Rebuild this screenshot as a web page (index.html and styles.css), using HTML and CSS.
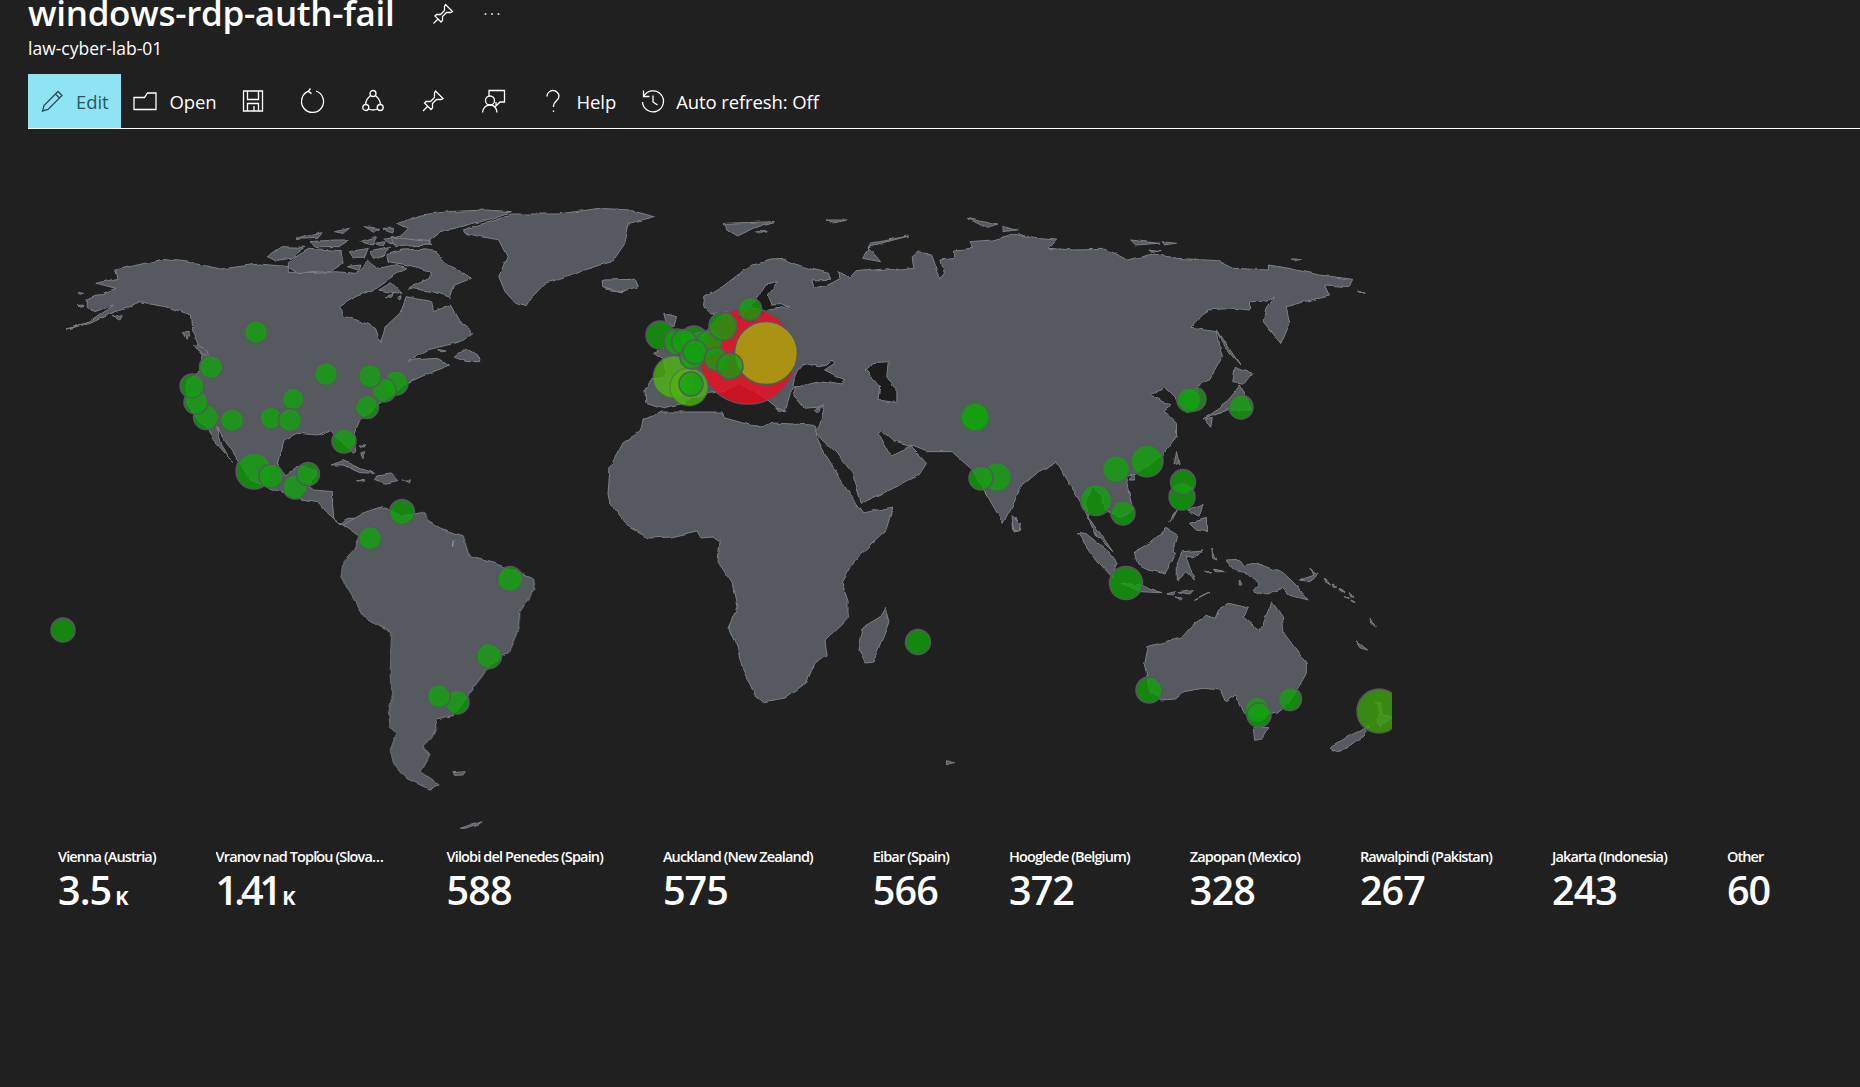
FILE: index.html
```html
<!DOCTYPE html>
<html>
<head>
    <meta charset="utf-8" />
    <title>windows-rdp-auth-fail</title>
    <link rel="stylesheet" href="styles.css">
</head>
<body>
    <div id="header">
        <div class="titleRow">
            <h1>windows-rdp-auth-fail</h1>
            <svg class="ico pinIco" viewBox="0 0 24 24"><path d="M14.5 2.5 21.5 9.5 19.5 10.5 15.5 10.5 11.5 14.5 11.5 18.5 10 20 4 14 5.5 12.5 9.5 12.5 13.5 8.5 13.5 4.5ZM7 17 2.5 21.5"/></svg>
            <svg class="dots" viewBox="0 0 16 4"><circle cx="1.5" cy="2" r="1"/><circle cx="8" cy="2" r="1"/><circle cx="14.5" cy="2" r="1"/></svg>
        </div>
        <div class="subtitle">law-cyber-lab-01</div>
    </div>

    <div id="toolbar">
        <div class="tool active">
            <svg class="ico" viewBox="0 0 24 24"><path d="M18 2.5 22 6.5 8 20.5 2.5 22 4 16.5ZM15.5 5 19.5 9"/></svg>
            <span>Edit</span>
        </div>
        <div class="tool openTool">
            <svg class="ico" viewBox="0 0 24 24"><path d="M1 8.5H11.5L14.5 4H23V20.5H1Z"/></svg>
            <span>Open</span>
        </div>
        <div class="tool iconOnly">
            <svg class="ico" viewBox="0 0 24 24"><path d="M2.5 2H21.5V22H2.5ZM6.5 2V10.5H17.5V2M6.5 22V14.5H17.5V22M13 17V22"/></svg>
        </div>
        <div class="tool iconOnly">
            <svg class="ico" viewBox="0 0 24 24"><path d="M15 2A11 11 0 1 1 7.5 2.2M9.5 -.5 7.3 2.3 10.5 4.6"/></svg>
        </div>
        <div class="tool iconOnly">
            <svg class="ico" viewBox="0 0 24 24"><circle cx="12" cy="4.5" r="3"/><circle cx="4.8" cy="18.5" r="3"/><circle cx="19.2" cy="18.5" r="3"/><path d="M9.6 6.5C6.5 9 4.6 12 4.6 15.5M14.4 6.5C17.5 9 19.4 12 19.4 15.5M7.8 20Q12 22 16.2 20"/></svg>
        </div>
        <div class="tool iconOnly">
            <svg class="ico" viewBox="0 0 24 24"><path d="M14.5 2 22 9.5 20 10.5 15.5 10.5 11.5 14.5 11.5 19 10 20.5 3.5 14 5 12.5 9.5 12.5 13.5 8.5 13.5 4ZM7 17 2 22"/></svg>
        </div>
        <div class="tool iconOnly">
            <svg class="ico" viewBox="0 0 24 24"><circle cx="9" cy="11.5" r="4.5"/><path d="M1.5 23.5C2 19 5 16 9 16S15.5 19 16 23.5M8 7V1.5H23.5V13H19L15 17V13"/></svg>
        </div>
        <div class="tool helpTool">
            <svg class="ico" viewBox="0 0 24 24"><path d="M6 7.5C6 3.8 8.8 1.5 12 1.5S18 4 18 7.2C18 11.5 12.5 12 12.5 17V18M12.5 21.5V23"/></svg>
            <span>Help</span>
        </div>
        <div class="tool helpTool">
            <svg class="ico" viewBox="0 0 24 24"><path d="M3.5 1.5V7.5H9.5M3.8 7.3A10.5 10.5 0 1 1 2.5 13M13 6.5V13L17.5 16"/></svg>
            <span>Auto refresh: Off</span>
        </div>
    </div>

    <svg id="map" width="1392" height="709" viewBox="0 129 1392 709">
        <defs>
            <filter id="rough" x="0" y="0" width="100%" height="100%">
                <feTurbulence type="fractalNoise" baseFrequency="0.09" numOctaves="2" seed="4"/>
                <feDisplacementMap in="SourceGraphic" scale="4" xChannelSelector="R" yChannelSelector="G"/>
            </filter>
        </defs>
        <!-- traced from the map, each group in its own scale -->
        <g class="world">
        <g transform="translate(40 190) scale(.4209 .3333)">
            <path class="land" d="M62 418 120 400 165 372 210 352 240 335 262 342 300 350 360 375 363 420 378 462 372 470 385 495 380 545 350 570 345 620 365 680 400 715 412 750 440 790 455 815 432 765 420 710 445 760 470 810 500 870 560 900 610 925 660 935 680 965 715 1005 730 985 750 985 725 1010 698 985 695 940 695 905 650 900 640 890 660 840 610 830 580 860 565 830 580 750 610 730 660 735 690 720 700 735 745 790 750 785 745 735 760 690 800 650 830 620 870 580 915 555 975 525 940 505 890 510 875 515 920 480 1000 455 1030 430 1000 400 975 345 935 365 930 335 870 320 855 370 825 405 810 458 797 415 765 395 720 378 712 350 750 320 800 295 830 268 870 232 845 225 800 235 780 210 750 250 700 245 660 250 590 250 590 230 520 222 430 237 345 215 290 208 180 240 185 265 135 280 180 295 110 330 110 350 130 365 175 345 120 395Z"/>
            <path class="land" d="M1005 120 1120 72 1230 72 1330 55 1400 60 1460 80 1400 100 1390 160 1360 215 1330 225 1270 250 1200 280 1170 320 1155 350 1130 340 1105 305 1090 260 1110 200 1090 150 1010 130Z"/>
            <path class="land" d="M850 100 905 75 970 65 1060 60 1120 65 1075 85 1015 105 950 125 925 150 930 165 870 165 830 160 815 145 860 135 875 115Z"/>
            <path class="land" d="M822 195 860 180 905 178 940 185 970 225 995 240 1025 265 985 285 975 322 935 305 875 295 925 265 930 245 875 225 825 215Z"/>
            <path class="land" d="M590 215 640 175 715 182 720 220 690 245 610 250 590 235Z"/>
            <path class="land" d="M540 200 575 170 630 172 595 205 560 212Z"/>
            <path class="land" d="M608 148 670 128 660 145ZM640 155 700 150 735 150 710 170 660 170ZM700 125 735 115 720 130ZM770 110 805 115 795 125ZM815 115 840 115 835 130ZM760 155 800 140 790 165ZM795 160 820 155 815 170ZM830 140 925 155 925 165 845 170ZM735 185 780 175 770 205 745 205ZM785 185 835 172 815 195 795 205ZM730 230 760 225 755 240ZM805 300 835 278 860 310 825 305ZM820 320 840 312 835 322ZM850 325 858 320 855 330Z"/>
            <path class="land" d="M985 500 1015 475 1040 495 1045 515 1015 515 990 505ZM945 478 965 483 950 486ZM340 425 355 425 350 448ZM365 465 395 480 402 500 375 485ZM90 306 104 310 95 314ZM88 347 102 345 100 352ZM172 380 195 375 190 390Z"/>
            <path class="land" d="M692 825 720 812 760 835 795 850 760 848 720 825ZM800 858 835 852 850 872 820 880 795 870ZM752 872 772 872 770 878ZM860 870 878 870 875 877ZM758 765 775 765 770 772ZM760 785 768 785 768 803Z"/>
            <path class="land" d="M1335 275 1400 268 1420 280 1385 305 1345 298Z"/>
        </g>

        <g transform="translate(280 500) scale(.4209 .3333)">
            <path class="land" d="M150 75 170 60 205 35 245 20 290 50 345 35 350 60 395 95 435 110 450 170 510 190 600 235 605 270 570 335 565 400 545 455 500 490 485 525 445 590 410 650 370 660 370 685 360 715 340 740 355 770 335 815 380 855 355 868 300 835 270 790 262 750 275 700 262 680 258 640 268 580 262 530 265 400 200 350 160 265 145 230 150 185 175 150 190 110Z"/>
            <path class="land" d="M408 818 440 815 435 825 412 826ZM428 988 480 965 470 975 440 988Z"/>
            <path class="mark" d="M412 118 410 140M1190 62 1195 68M1287 52V62M1243 245 1250 260"/>
        </g>

        <g transform="translate(600 190) scale(.5102 .3333)">
            <path class="land" d="M90 640 88 600 100 570 130 555 125 510 105 490 135 470 170 440 210 420 235 385 250 365 215 372 203 345 205 322 240 290 270 255 300 225 335 210 362 208 400 232 450 250 452 268 415 270 420 295 445 285 470 265 468 245 490 262 500 245 575 235 590 240 615 235 612 200 625 185 650 195 655 215 665 268 675 250 668 210 695 205 695 180 730 175 725 155 770 150 815 130 850 145 895 150 880 175 930 180 990 178 1035 210 1085 192 1130 205 1210 212 1240 235 1310 240 1310 225 1350 235 1410 255 1475 268 1470 290 1420 285 1430 318 1380 335 1345 350 1352 400 1335 462 1300 395 1305 355 1322 318 1305 335 1275 335 1275 360 1240 355 1190 360 1158 415 1210 425 1215 470 1220 500 1195 570 1170 590 1175 650 1150 668 1125 620 1105 590 1080 615 1100 630 1120 645 1105 665 1130 700 1130 740 1100 800 1050 850 1030 860 1040 930 1045 960 1020 980 990 960 985 920 965 890 950 940 960 985 985 1040 1005 1085 975 1040 945 945 920 880 895 815 860 845 825 890 805 960 790 1000 760 920 730 840 690 785 640 785 612 768 575 752 552 722 545 730 565 785 572 795 608 768 640 820 625 855 575 895 512 940 505 900 495 850 470 800 432 745 428 735 418 728 430 708 440 650 400 655 380 620 385 595 375 600 362 665 345 655 345 650 320 620 270 580 250 600 215 610 175 625 165 640 120 655Z"/>
            <path class="sea" d="M380 590 385 550 400 520 430 530 445 525 455 510 460 520 440 540 480 570 475 585 430 575 390 590Z"/>
            <path class="sea" d="M525 535 535 518 565 515 562 560 580 600 580 638 545 630 548 590 520 540Z"/>
            <path class="sea" d="M348 278 325 285 310 320 290 360 265 390 300 400 330 360 372 350 360 344 335 345 330 315Z"/>
            <path class="land" d="M5 270 70 268 75 290 40 305 5 290ZM125 370 150 380 145 410 130 400ZM242 100 340 95 300 115 270 138 250 120ZM305 125 328 125 315 130ZM445 90 485 90 460 98ZM605 138 530 160 515 205 550 215 525 170ZM720 85 780 105 760 115ZM790 110 818 120 790 125ZM1040 150 1095 160 1050 165ZM1100 155 1130 160 1105 165ZM1078 178 1100 182 1080 184ZM1355 210 1375 210 1365 215ZM1485 300 1500 310 1485 305Z"/>
            <path class="land" d="M1210 420 1235 480 1255 525 1240 500 1225 470ZM1245 535 1280 550 1265 580 1240 575ZM1255 585 1278 660 1230 660 1180 690 1215 655ZM1185 690 1200 685 1197 712ZM1130 785 1135 820 1125 825ZM1045 850 1050 870 1035 870ZM345 655 365 660 350 665ZM420 660 440 645 425 668Z"/>
        </g>

        <path class="land" d="M815 427 818 440 827 457 837 473 847 490 857 505 863 513 893 507 886 530 857 557 842 583 848 600 848 618 825 640 827 655 815 663 806 683 785 698 762 702 756 697 743 670 737 647 728 627 737 607 732 583 718 562 720 542 713 537 701 538 697 531 671 537 648 538 629 527 610 503 608 495 610 467 623 443 641 430 643 420 661 412 722 412 725 418 761 428 773 423 812 425Z"/>
        <path class="land" d="M885 607 889 622 873 662 865 663 859 650 863 627 880 617ZM1016 517 1021 530 1013 532 1012 523Z"/>

        <g transform="translate(900 500) scale(.3444 .3333)">
            <path class="land" d="M955 310 1015 325 995 350 1045 392 1080 305 1110 350 1115 400 1180 490 1180 520 1130 610 1095 640 1035 650 1000 640 975 585 945 605 930 570 880 565 825 575 800 597 760 600 725 570 710 495 720 440 820 410 850 375 890 345 915 355 925 330Z"/>
            <path class="land" d="M1025 680 1068 683 1050 715 1030 718ZM1246 745 1300 710 1350 685 1365 680 1340 710 1290 750 1270 755ZM1380 605 1395 610 1400 640 1428 650 1395 680 1385 665 1395 640Z"/>
            <path class="land" d="M945 180 985 178 1000 200 1035 190 1115 220 1150 255 1185 300 1130 285 1110 265 1060 285 1025 272 1040 255 1010 220 970 210ZM775 85 805 105 790 155 800 160 770 222 720 210 690 195 680 155 725 130ZM805 240 805 190 820 155 880 150 860 170 830 170 855 240 830 215ZM515 100 545 105 600 150 630 190 615 230 570 180ZM640 250 700 255 760 278 700 275ZM772 282 800 275 795 285ZM810 278 850 272 840 285ZM855 298 900 275 870 292ZM800 290 820 295 815 300Z"/>
            <path class="land" d="M780 65 805 30 795 50ZM840 70 890 55 890 95 860 90ZM835 30 880 10 870 50ZM1190 205 1215 225 1190 245 1160 240 1205 225ZM1232 235 1250 258 1238 250ZM1255 255 1268 262 1258 262ZM1275 265 1295 275 1285 275ZM1290 290 1305 295 1295 297ZM1310 300 1322 307 1312 305ZM1305 275 1315 292 1308 290ZM1368 355 1380 380 1370 370ZM1325 423 1358 450 1340 445ZM905 145 920 180 908 175ZM885 210 905 215 890 217ZM910 208 945 215 915 215ZM985 240 992 255 985 255ZM325 50 350 70 345 95 330 90ZM135 782 158 788 135 795Z"/>
        </g>
        </g>

        <g class="bubbles">
            <circle class="red" cx="748" cy="356" r="48"/>
            <circle class="yellow" cx="766" cy="353" r="31.5"/>
            <circle class="lime" cx="674" cy="377" r="21"/>
            <circle class="lime" cx="689" cy="387" r="19"/>
            <circle cx="660" cy="335" r="14"/>
            <circle cx="677" cy="342" r="13"/>
            <circle cx="694" cy="340" r="14"/>
            <circle cx="684" cy="342" r="12.5"/>
            <circle cx="709" cy="343" r="12.5"/>
            <circle cx="692" cy="357" r="12"/>
            <circle cx="695" cy="352" r="12"/>
            <circle cx="716" cy="359" r="11.5"/>
            <circle cx="730" cy="366" r="13"/>
            <circle cx="723" cy="326" r="14"/>
            <circle cx="750" cy="309" r="11.5"/>
            <circle cx="691" cy="384" r="12"/>
            <circle cx="256" cy="332" r="11.5"/>
            <circle cx="211" cy="367" r="11.5"/>
            <circle cx="206" cy="417" r="12.5"/>
            <circle cx="196" cy="402" r="12"/>
            <circle cx="192" cy="386" r="12"/>
            <circle cx="232" cy="420" r="11.5"/>
            <circle cx="293" cy="399" r="11"/>
            <circle cx="271" cy="418" r="11"/>
            <circle cx="290" cy="420" r="11.5"/>
            <circle cx="326" cy="374" r="11.5"/>
            <circle cx="396" cy="383" r="12"/>
            <circle cx="384" cy="390" r="12"/>
            <circle cx="370" cy="376" r="11.5"/>
            <circle cx="367" cy="407" r="11.5"/>
            <circle cx="344" cy="441" r="12"/>
            <circle cx="254" cy="471" r="18"/>
            <circle cx="271" cy="476" r="12"/>
            <circle cx="295" cy="487" r="12"/>
            <circle cx="308" cy="474" r="11.5"/>
            <circle cx="402" cy="512" r="12.5"/>
            <circle cx="370" cy="538" r="11.5"/>
            <circle cx="510" cy="579" r="12.5"/>
            <circle cx="489" cy="656" r="12.5"/>
            <circle cx="457" cy="702" r="12"/>
            <circle cx="439" cy="696" r="11.5"/>
            <circle cx="63" cy="630" r="12"/>
            <circle cx="918" cy="642" r="12.5"/>
            <circle cx="975" cy="417" r="16"/>
            <circle cx="975" cy="417" r="14"/>
            <circle cx="997" cy="477" r="14.5"/>
            <circle cx="981" cy="478" r="12"/>
            <circle cx="1147" cy="461" r="16"/>
            <circle cx="1116" cy="469" r="13.5"/>
            <circle cx="1096" cy="500" r="15.5"/>
            <circle cx="1123" cy="513" r="12"/>
            <circle cx="1182" cy="497" r="13"/>
            <circle cx="1183" cy="482" r="12.5"/>
            <circle cx="1194" cy="399" r="12"/>
            <circle cx="1189" cy="400" r="12"/>
            <circle cx="1241" cy="407" r="12"/>
            <circle cx="1126" cy="583" r="16.5"/>
            <circle cx="1149" cy="690" r="13"/>
            <circle cx="1257" cy="709" r="12"/>
            <circle cx="1259" cy="715" r="12"/>
            <circle cx="1290" cy="699" r="11.5"/>
            <circle class="olive" cx="1379" cy="711" r="22"/>
        </g>
    </svg>

    <div id="tiles">
        <div class="tile"><div class="label">Vienna (Austria)</div><div class="value">3.5<span class="unit">K</span></div></div>
        <div class="tile wide"><div class="label">Vranov nad Topľou (Slovakia)</div><div class="value tight">1.41<span class="unit">K</span></div></div>
        <div class="tile"><div class="label">Vilobi del Penedes (Spain)</div><div class="value">588</div></div>
        <div class="tile"><div class="label">Auckland (New Zealand)</div><div class="value">575</div></div>
        <div class="tile"><div class="label">Eibar (Spain)</div><div class="value">566</div></div>
        <div class="tile"><div class="label">Hooglede (Belgium)</div><div class="value">372</div></div>
        <div class="tile"><div class="label">Zapopan (Mexico)</div><div class="value">328</div></div>
        <div class="tile"><div class="label">Rawalpindi (Pakistan)</div><div class="value">267</div></div>
        <div class="tile"><div class="label">Jakarta (Indonesia)</div><div class="value">243</div></div>
        <div class="tile"><div class="label">Other</div><div class="value">60</div></div>
    </div>
</body>
</html>
```

FILE: styles.css
```css
body {
    margin: 0;
    padding: 0;
    height: 1087px;
    background: #202020;
    color: white;
    font-family: "Open Sans", Arial, sans-serif;
    overflow: hidden;
}

#header {
    padding-left: 28px;
}

.titleRow {
    display: flex;
    align-items: center;
    height: 32px;
}

h1 {
    margin: -6px 0 0 0;
    font-size: 35px;
    font-weight: 600;
    line-height: 36px;
    letter-spacing: -0.3px;
}

.ico {
    width: 24px;
    height: 24px;
    flex: none;
    fill: none;
    stroke: white;
    stroke-width: 1.3;
    overflow: visible;
}

.pinIco {
    width: 24px;
    height: 24px;
    margin-left: 36px;
    margin-top: -4px;
}

.dots {
    width: 16px;
    height: 4px;
    margin-left: 29px;
    margin-top: -4px;
    fill: #ddd;
}

.subtitle {
    margin-top: 6px;
    font-size: 17.5px;
    line-height: 21px;
}

#toolbar {
    display: flex;
    height: 54px;
    margin-top: 15px;
    margin-left: 28px;
    border-bottom: 1px solid white;
    font-size: 18.5px;
    letter-spacing: -0.1px;
}

.tool {
    display: flex;
    align-items: center;
    gap: 12px;
    padding: 0 6px 0 12px;
}

.tool.active {
    padding: 0 13px 0 12px;
    background: #8fe4f4;
    color: #2b5666;
}

.tool.active .ico {
    stroke: #2b4a57;
}

.iconOnly {
    padding: 0 18px;
}

.helpTool {
    padding-left: 18px;
}

#map {
    display: block;
}

.world {
    filter: url(#rough);
}

.land {
    fill: #575a60;
    stroke: #7d8187;
    stroke-width: 1;
    stroke-linejoin: round;
    vector-effect: non-scaling-stroke;
}

.sea {
    fill: #1f1f1f;
    stroke: #7d8187;
    stroke-width: 1;
    vector-effect: non-scaling-stroke;
}

.mark {
    fill: none;
    stroke: #a8abaf;
    stroke-width: 1;
    vector-effect: non-scaling-stroke;
}

.bubbles circle {
    fill: #13a10e;
    fill-opacity: 0.8;
    stroke: #55585c;
    stroke-width: 1.5;
}

.bubbles .red {
    fill: #e81123;
    fill-opacity: 0.85;
}

.bubbles .yellow {
    fill: #a89a12;
    fill-opacity: 0.95;
}

.bubbles .lime {
    fill: #4db510;
    stroke-opacity: 0.4;
}

.bubbles .olive {
    fill: #3ea30f;
}

#tiles {
    display: flex;
    gap: 60px;
    padding-left: 58px;
    margin-top: 9px;
}

.label {
    font-size: 14.5px;
    font-weight: 600;
    line-height: 20px;
    letter-spacing: -0.87px;
    white-space: nowrap;
}

.wide .label {
    width: 171px;
    overflow: hidden;
    text-overflow: ellipsis;
}

.value {
    font-size: 39.5px;
    font-weight: 600;
    line-height: 47px;
    letter-spacing: -0.9px;
}

.value.tight {
    letter-spacing: -4px;
}

.unit {
    margin-left: 4px;
    font-size: 20px;
    font-weight: 700;
    letter-spacing: 0;
}
```
